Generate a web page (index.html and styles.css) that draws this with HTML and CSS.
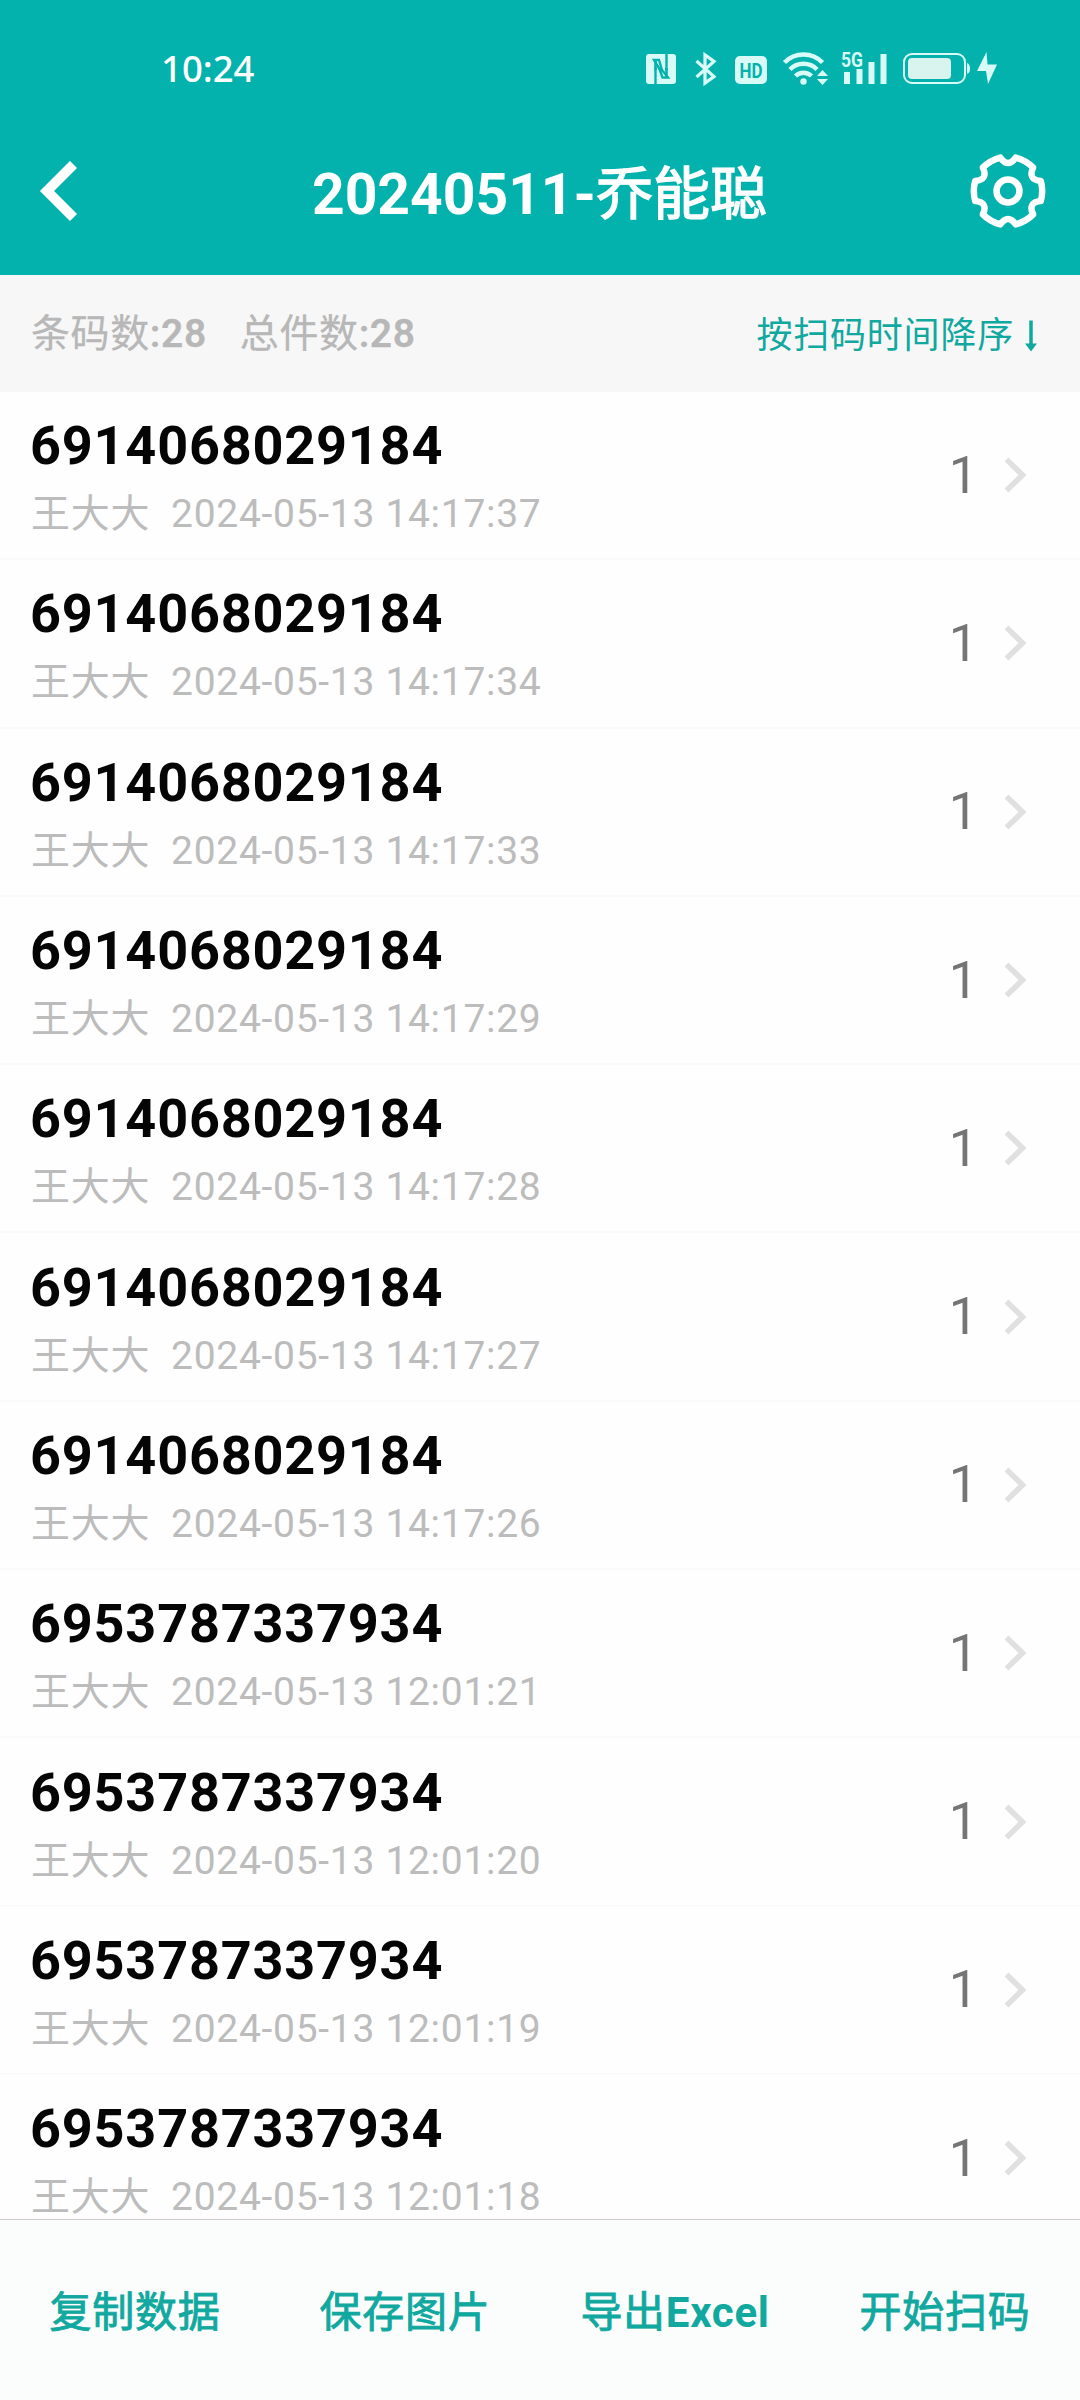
FILE: index.html
```html
<!DOCTYPE html>
<html lang="zh-CN">
<head>
    <meta charset="UTF-8">
    <meta name="viewport" content="width=device-width, initial-scale=1.0">
    <title>20240511-乔能聪</title>
    <link rel="stylesheet" href="styles.css">
</head>
<body>
    <div class="app">
        <header class="header">
            <div class="status-bar">
                <span class="clock">10:24</span>
                <div class="status-icons">
                    <svg class="nfc" width="30" height="38" viewBox="0 0 30 38">
                        <rect x="0" y="4" width="30" height="30" rx="3" fill="#d9fbf8"/>
                        <path d="M9.500 34V18M20.500 4V20M8 10L13 10L16 20L22 27.500H16.500L13.500 19Z" fill="none" stroke="#03b2ac" stroke-width="2.400"/>
                        <path d="M9.500 20V10" stroke="#03b2ac" stroke-width="2.600"/>
                        <path d="M20.500 18V28" stroke="#03b2ac" stroke-width="2.600"/>
                    </svg>
                    <svg class="bluetooth" width="22" height="38" viewBox="0 0 22 38">
                        <path d="M1.500 11L19 26.500L10 33V5L19 11.500L1.500 27" fill="none" stroke="#d9fbf8" stroke-width="3.200"/>
                    </svg>
                    <svg class="hd" width="32" height="38" viewBox="0 0 32 38">
                        <rect x="0" y="6" width="32" height="28" rx="5" fill="#d9fbf8"/>
                        <text class="hd-text" x="16" y="27.500" text-anchor="middle" textLength="23" lengthAdjust="spacingAndGlyphs">HD</text>
                    </svg>
                    <svg class="wifi" width="46" height="38" viewBox="0 0 46 38">
                        <g fill="none" stroke="#d9fbf8" stroke-width="4.500">
                            <path d="M1.500 12.500A26.500 26.500 0 0 1 39.500 12.500"/>
                            <path d="M7 19.500A19 19 0 0 1 34 19.500"/>
                            <path d="M12.500 26A11.500 11.500 0 0 1 28.500 26"/>
                        </g>
                        <circle cx="20.500" cy="31.500" r="3.200" fill="#d9fbf8"/>
                        <path d="M34 26L39.500 20L45 26ZM34 29L39.500 35L45 29Z" fill="#d9fbf8"/>
                    </svg>
                    <svg class="signal" width="46" height="38" viewBox="0 0 46 38">
                        <text class="net-text" x="0" y="17" textLength="22" lengthAdjust="spacingAndGlyphs">5G</text>
                        <path d="M3 22H9V34H3ZM15.500 19H21.500V34H15.500ZM27.500 12H33.500V34H27.500ZM39.500 4H45.500V34H39.500Z" fill="#d9fbf8"/>
                    </svg>
                    <svg class="battery" width="67" height="38" viewBox="0 0 67 38">
                        <rect x="1" y="4" width="61" height="29" rx="8" fill="none" stroke="#d9fbf8" stroke-width="2"/>
                        <rect x="5" y="8" width="43" height="21" rx="4" fill="#d9f3ef"/>
                        <path d="M64 13Q67 14 67 18.500Q67 23 64 24Z" fill="#d9fbf8"/>
                    </svg>
                    <svg class="bolt" width="20" height="38" viewBox="0 0 20 38">
                        <path d="M9.500 2L0 21H9L11 34L20 14.500H10.500Z" fill="#d9fbf8"/>
                    </svg>
                </div>
            </div>
            <div class="nav">
                <svg class="back" width="40" height="60" viewBox="0 0 40 60">
                    <path d="M35.500 3.500L9 30L35.500 56.500" fill="none" stroke="#fff" stroke-width="10"/>
                </svg>
                <h1>20240511-<span class="cn">乔能聪</span></h1>
                <svg class="settings" width="80" height="80" viewBox="-40 -40 80 80">
                    <g fill="none" stroke="#fff" stroke-width="6.500" stroke-linejoin="round">
                        <path d="M32.800 -10Q35.600 0 32.800 10Q19.500 11.300 25.100 23.400Q17.800 30.800 7.700 33.400Q0 22.500 -7.700 33.400Q-17.800 30.800 -25.100 23.400Q-19.500 11.300 -32.800 10Q-35.600 0 -32.800 -10Q-19.500 -11.300 -25.100 -23.400Q-17.800 -30.800 -7.700 -33.400Q0 -22.500 7.700 -33.400Q17.800 -30.800 25.100 -23.400Q19.500 -11.300 32.800 -10Z"/>
                        <circle r="11.500"/>
                    </g>
                </svg>
            </div>
        </header>
        <div class="summary">
            <div class="counts">
                <span>条码数<b>:28</b></span>
                <span>总件数<b>:28</b></span>
            </div>
            <div class="sort">
                <span>按扫码时间降序</span>
                <svg class="sort-arrow" width="12" height="34" viewBox="0 0 12 34">
                    <path d="M6 1.500V28" stroke="#10a89f" stroke-width="3.500"/>
                    <path d="M0 24.500H12L6 32.500Z" fill="#10a89f"/>
                </svg>
            </div>
        </div>
        <ul class="list" id="scan-list"></ul>
        <footer class="actions">
            <div class="action"><span class="cn">复制数据</span></div>
            <div class="action"><span class="cn">保存图片</span></div>
            <div class="action"><span class="cn">导出</span>Excel</div>
            <div class="action"><span class="cn">开始扫码</span></div>
        </footer>
    </div>
    <script>
        const scanList = document.getElementById('scan-list');
        const scans = [
            { code: '6914068029184', time: '2024-05-13 14:17:37' },
            { code: '6914068029184', time: '2024-05-13 14:17:34' },
            { code: '6914068029184', time: '2024-05-13 14:17:33' },
            { code: '6914068029184', time: '2024-05-13 14:17:29' },
            { code: '6914068029184', time: '2024-05-13 14:17:28' },
            { code: '6914068029184', time: '2024-05-13 14:17:27' },
            { code: '6914068029184', time: '2024-05-13 14:17:26' },
            { code: '6953787337934', time: '2024-05-13 12:01:21' },
            { code: '6953787337934', time: '2024-05-13 12:01:20' },
            { code: '6953787337934', time: '2024-05-13 12:01:19' },
            { code: '6953787337934', time: '2024-05-13 12:01:18' }
        ];
        scans.forEach((scan) => {
            const li = document.createElement('li');
            li.className = 'row';
            li.innerHTML = `
                <div class="info">
                    <div class="code">${scan.code}</div>
                    <div class="meta"><span>王大大</span><span>${scan.time}</span></div>
                </div>
                <span class="qty">1</span>
                <svg class="arrow" width="24" height="38" viewBox="0 0 24 38">
                    <path d="M2.500 3.500L18.500 19L2.500 34.500" fill="none" stroke="#e0e0e0" stroke-width="5.500"/>
                </svg>
            `;
            scanList.appendChild(li);
        });
    </script>
</body>
</html>
```

FILE: styles.css
```css
* {
    box-sizing: border-box;
}
body {
    margin: 0;
    background-color: #fefefe;
    font-family: Roboto, "Noto Sans CJK SC", sans-serif;
}
.app {
    display: flex;
    flex-direction: column;
    width: 1080px;
    height: 2400px;
    overflow: hidden;
}
.header {
    height: 275px;
    background-color: #03b2ac;
    color: white;
}
.status-bar {
    display: flex;
    justify-content: space-between;
    align-items: flex-start;
    height: 107px;
    padding: 50px 83px 0 161px;
}
.clock {
    font-family: "Noto Sans", sans-serif;
    font-size: 36.5px;
    font-weight: 500;
    line-height: 36px;
}
.status-icons {
    display: flex;
}
.status-icons svg {
    display: block;
    overflow: visible;
}
.bluetooth {
    margin-left: 19px;
}
.hd {
    margin-left: 18px;
}
.wifi {
    margin-left: 16px;
}
.signal {
    margin-left: 12px;
}
.battery {
    margin-left: 16px;
}
.bolt {
    margin-left: 7px;
}
.hd-text {
    font-size: 20px;
    font-weight: 700;
    fill: #03b2ac;
}
.net-text {
    font-size: 21px;
    font-weight: 700;
    fill: #d9fbf8;
}
.nav {
    display: flex;
    justify-content: space-between;
    align-items: center;
    height: 168px;
    padding: 0 32px 0 38px;
}
.back {
    margin-right: 33px;
}
/* Chinese glyphs are drawn a little lighter than the bold digits */
.cn {
    font-weight: 400;
    -webkit-text-stroke: 0.9px currentColor;
}
h1 {
    margin: 0;
    padding-top: 7px;
    font-size: 57px;
    font-weight: 700;
    line-height: 70px;
}
h1 .cn {
    -webkit-text-stroke-width: 1.4px;
}
.summary {
    display: flex;
    justify-content: space-between;
    align-items: center;
    height: 117px;
    padding: 0 43px 3px 31px;
    background-color: #f7f7f8;
}
.counts {
    display: flex;
    gap: 33px;
    padding-top: 3px;
    font-size: 39px;
    line-height: 48px;
    letter-spacing: 0.6px;
    color: #b7b7b7;
    -webkit-text-stroke: 0.3px #b7b7b7;
}
.counts b {
    font-weight: 600;
}
.sort {
    display: flex;
    align-items: center;
    gap: 11px;
    font-size: 36px;
    letter-spacing: 0.8px;
    color: #10a89f;
}
.sort-arrow {
    margin-top: 8px;
}
.list {
    flex: 1;
    margin: 0;
    padding: 0;
    overflow: hidden;
    list-style: none;
}
.row {
    display: flex;
    align-items: center;
    height: 168.3px;
    padding: 2px 52px 0 30px;
    border-bottom: 2px solid #fafafa;
}
.info {
    flex: 1;
}
.code {
    font-size: 54px;
    font-weight: 700;
    line-height: 64px;
    letter-spacing: 0.8px;
    color: #050505;
}
.meta {
    display: flex;
    gap: 21px;
    margin-top: 12px;
    padding-left: 1px;
    font-size: 39px;
    line-height: 48px;
    letter-spacing: 0.7px;
    color: #bcbcbc;
}
.qty {
    margin-right: 26px;
    padding-bottom: 2px;
    font-size: 52px;
    color: #757575;
}
.arrow {
    margin-bottom: 2px;
}
.actions {
    display: flex;
    align-items: center;
    height: 181px;
    padding-bottom: 4px;
    border-top: 1px solid #cfc9c9;
    background-color: #fafdfc;
}
.action {
    flex: 1;
    text-align: center;
    font-size: 42px;
    font-weight: 700;
    letter-spacing: 0.7px;
    color: #10a89f;
}
```
